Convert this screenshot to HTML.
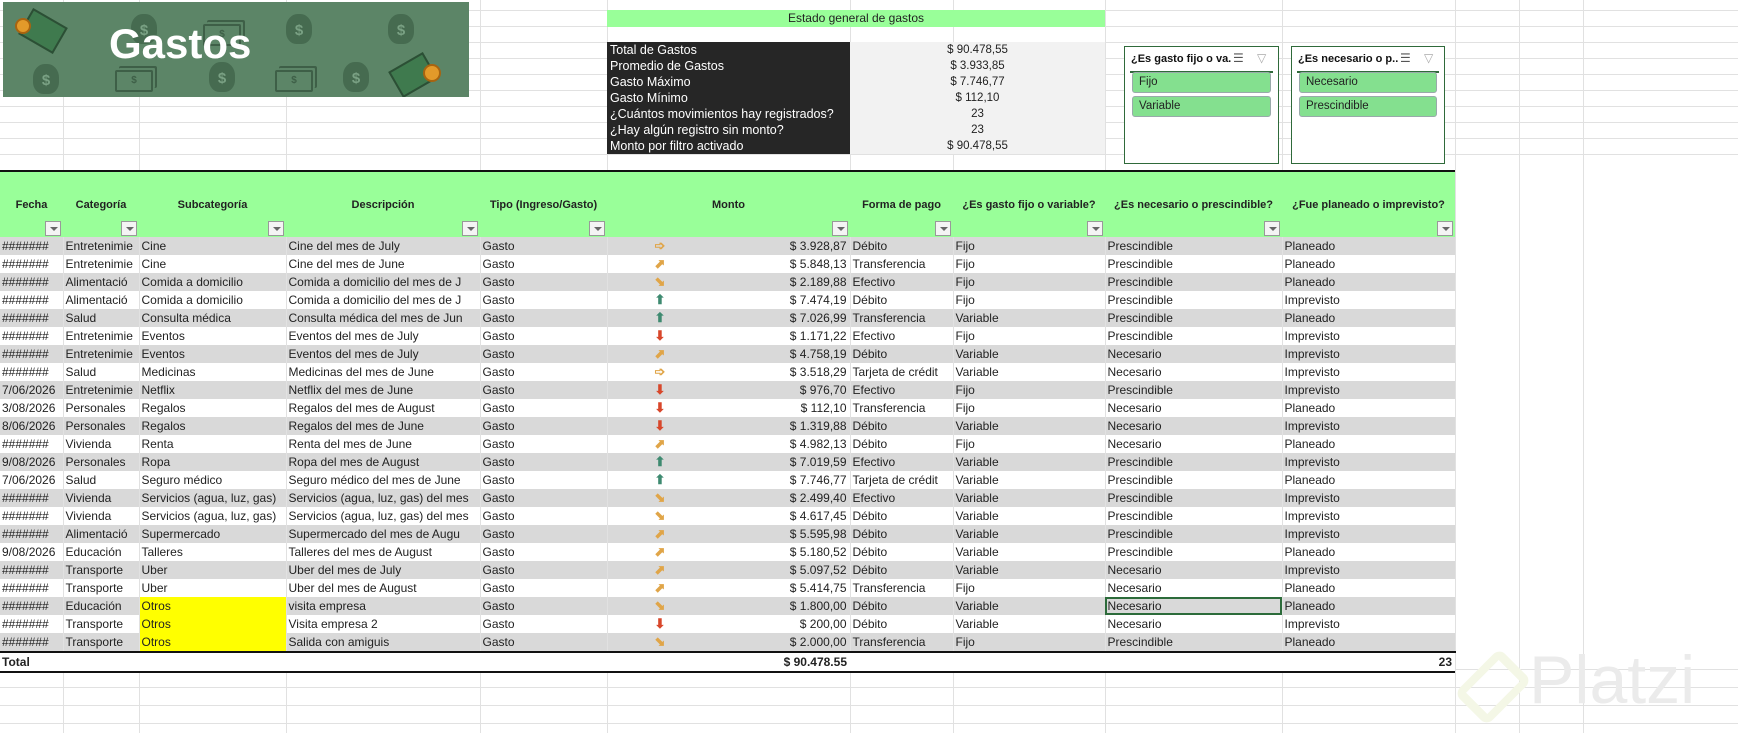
<!DOCTYPE html>
<html><head><meta charset="utf-8"><style>
*{margin:0;padding:0;box-sizing:border-box}
body{width:1738px;height:733px;overflow:hidden;position:relative;background:#fff;font-family:"Liberation Sans",sans-serif;color:#222}
.g{position:absolute;left:0;width:1738px;background-image:repeating-linear-gradient(to bottom,#e1e1e1 0,#e1e1e1 1px,transparent 1px,transparent 16px)}
.v{position:absolute;top:0;width:1px;height:733px;background:#e1e1e1}
.banner{position:absolute;left:3px;top:2px;width:466px;height:95px;background:#5c8567;overflow:hidden}
.banner .t{position:absolute;left:106px;top:18px;font-size:42px;font-weight:bold;color:#fff}
.bag{position:absolute;width:26px;height:30px;background:#466b50;border-radius:45% 45% 40% 40%;color:#7aa184;font-weight:bold;font-size:15px;text-align:center;line-height:34px}
.bill{position:absolute;width:38px;height:22px;border:2px solid #3e5f47;border-radius:2px;color:#3e5f47;font-size:10px;font-weight:bold;text-align:center;line-height:18px;box-shadow:3px -3px 0 -1px #5c8567,4px -4px 0 0 #3e5f47}
.estado{position:absolute;left:607px;top:10px;width:498px;height:17px;background:#99ff99;font-size:12px;text-align:center;line-height:17px}
.stats{position:absolute;left:607px;top:42px;width:498px;height:113px}
.stats .r{height:16px;display:flex;font-size:12.5px;line-height:16px}
.stats .k{width:243px;background:#262626;color:#fff;padding-left:3px}
.stats .val{width:255px;background:#f2f2f2;text-align:center;font-size:11.5px}
.slicer{position:absolute;top:46px;height:118px;border:1.5px solid #2f6a3a;background:#fff}
.slicer .h{position:absolute;left:6px;top:6px;font-size:11px;font-weight:bold;color:#111;width:100px;overflow:hidden;white-space:nowrap}
.slicer .ln{position:absolute;left:5px;right:5px;top:24px;height:1.5px;background:#2f6a3a}
.slicer .b{position:absolute;left:7px;right:7px;height:21px;background:#84e08f;border:1px solid #9aa;border-radius:3px;font-size:11.5px;line-height:19px;padding-left:6px}
.ic{position:absolute;top:4px;font-size:12px;color:#555}
table{position:absolute;left:0;top:170px;border-collapse:collapse;table-layout:fixed;width:1455px}
td{height:18px;font-size:12px;white-space:nowrap;overflow:hidden;padding:0 2px;line-height:18px;border-right:1px solid #e1e1e1;position:relative}
thead td{height:66px;background:#99ff99;border:none;font-size:11px;font-weight:bold;text-align:center;vertical-align:top;padding-top:26px;position:relative;line-height:14px}
thead tr{border-top:2px solid #111}
.fb{position:absolute;right:2px;bottom:1px;width:16px;height:15px;background:#f4f4f4;border:1px solid #999;}
.fb:after{content:"";position:absolute;left:4px;top:5px;border-left:4px solid transparent;border-right:4px solid transparent;border-top:4px solid #666}
tbody tr:nth-child(odd) td{background:#d9d9d9}
.m{text-align:right;padding-right:3px}
.a{position:absolute;left:47px;top:0;font-size:13px;font-weight:bold}
.o{color:#e0a548}.u{color:#3e8a70}.d{color:#d8472b}
td.y{background:#ffff00!important}
.sel{outline:2px solid #2c6b3a;outline-offset:-2px}
tr.tot td{background:#fff;font-weight:bold;border-right:none;border-top:2px solid #111;border-bottom:2px solid #111}
.pl{position:absolute;left:1529px;top:641px;font-size:68px;color:#ebebeb;font-family:"Liberation Sans",sans-serif}
.plg{position:absolute;left:1470px;top:658px;width:46px;height:58px;border:8px solid #f4f7e6;transform:skewY(0) rotate(45deg) scaleY(1.1);border-radius:8px}
</style></head><body>
<div class="g" style="top:10px;height:160px"></div>
<div class="g" style="top:669px;height:64px;background-image:repeating-linear-gradient(to bottom,#e1e1e1 0,#e1e1e1 1px,transparent 1px,transparent 18px)"></div>
<div class="v" style="left:63px"></div><div class="v" style="left:139px"></div><div class="v" style="left:286px"></div><div class="v" style="left:480px"></div><div class="v" style="left:607px"></div><div class="v" style="left:850px"></div><div class="v" style="left:953px"></div><div class="v" style="left:1105px"></div><div class="v" style="left:1282px"></div><div class="v" style="left:1455px"></div><div class="v" style="left:1519px"></div><div class="v" style="left:1583px"></div>

<div class="banner">
<div class="bag" style="left:128px;top:12px">$</div><div class="bag" style="left:283px;top:12px">$</div><div class="bag" style="left:385px;top:12px">$</div>
<div class="bag" style="left:30px;top:62px">$</div><div class="bag" style="left:206px;top:60px">$</div><div class="bag" style="left:340px;top:60px">$</div>
<div class="bill" style="left:200px;top:22px">$</div><div class="bill" style="left:112px;top:68px">$</div><div class="bill" style="left:272px;top:68px">$</div>
<div style="position:absolute;left:20px;top:14px;width:40px;height:30px;background:#3f7a4e;border:2px solid #2c4f35;transform:rotate(30deg)"></div>
<div style="position:absolute;left:12px;top:16px;width:16px;height:16px;border-radius:50%;background:#e39a2a;border:2px solid #a86410"></div>
<div style="position:absolute;left:390px;top:58px;width:40px;height:30px;background:#3f7a4e;border:2px solid #2c4f35;transform:rotate(-30deg)"></div>
<div style="position:absolute;left:420px;top:62px;width:18px;height:18px;border-radius:50%;background:#e39a2a;border:2px solid #a86410"></div>
<div class="t">Gastos</div>
</div>

<div class="estado">Estado general de gastos</div>
<div class="stats">
<div class="r"><div class="k">Total de Gastos</div><div class="val">$ 90.478,55</div></div>
<div class="r"><div class="k">Promedio de Gastos</div><div class="val">$ 3.933,85</div></div>
<div class="r"><div class="k">Gasto Máximo</div><div class="val">$ 7.746,77</div></div>
<div class="r"><div class="k">Gasto Mínimo</div><div class="val">$ 112,10</div></div>
<div class="r"><div class="k">¿Cuántos movimientos hay registrados?</div><div class="val">23</div></div>
<div class="r"><div class="k">¿Hay algún registro sin monto?</div><div class="val">23</div></div>
<div class="r"><div class="k">Monto por filtro activado</div><div class="val">$ 90.478,55</div></div>
</div>

<div class="slicer" style="left:1124px;width:155px"><div class="h">¿Es gasto fijo o va...</div><span class="ic" style="left:108px">☰</span><span class="ic" style="left:132px;color:#aaa">▽</span><div class="ln"></div><div class="b" style="top:25px">Fijo</div><div class="b" style="top:49px">Variable</div></div>
<div class="slicer" style="left:1291px;width:154px"><div class="h">¿Es necesario o p...</div><span class="ic" style="left:108px">☰</span><span class="ic" style="left:132px;color:#aaa">▽</span><div class="ln"></div><div class="b" style="top:25px">Necesario</div><div class="b" style="top:49px">Prescindible</div></div>

<table>
<colgroup><col style="width:63px"><col style="width:76px"><col style="width:147px"><col style="width:194px"><col style="width:127px"><col style="width:243px"><col style="width:103px"><col style="width:152px"><col style="width:177px"><col style="width:173px"></colgroup>
<thead><tr>
<td>Fecha<span class="fb"></span></td><td>Categoría<span class="fb"></span></td><td>Subcategoría<span class="fb"></span></td><td>Descripción<span class="fb"></span></td><td>Tipo (Ingreso/Gasto)<span class="fb"></span></td><td>Monto<span class="fb"></span></td><td>Forma de pago<span class="fb"></span></td><td>¿Es gasto fijo o variable?<span class="fb"></span></td><td>¿Es necesario o prescindible?<span class="fb"></span></td><td>¿Fue planeado o imprevisto?<span class="fb"></span></td>
</tr></thead>
<tbody>
<tr><td>#######</td><td>Entretenimie</td><td>Cine</td><td>Cine del mes de July</td><td>Gasto</td><td class="m"><span class="a o">➩</span>$ 3.928,87</td><td>Débito</td><td>Fijo</td><td>Prescindible</td><td>Planeado</td></tr>
<tr><td>#######</td><td>Entretenimie</td><td>Cine</td><td>Cine del mes de June</td><td>Gasto</td><td class="m"><span class="a o">⬈</span>$ 5.848,13</td><td>Transferencia</td><td>Fijo</td><td>Prescindible</td><td>Planeado</td></tr>
<tr><td>#######</td><td>Alimentació</td><td>Comida a domicilio</td><td>Comida a domicilio del mes de J</td><td>Gasto</td><td class="m"><span class="a o">⬊</span>$ 2.189,88</td><td>Efectivo</td><td>Fijo</td><td>Prescindible</td><td>Planeado</td></tr>
<tr><td>#######</td><td>Alimentació</td><td>Comida a domicilio</td><td>Comida a domicilio del mes de J</td><td>Gasto</td><td class="m"><span class="a u">⬆</span>$ 7.474,19</td><td>Débito</td><td>Fijo</td><td>Prescindible</td><td>Imprevisto</td></tr>
<tr><td>#######</td><td>Salud</td><td>Consulta médica</td><td>Consulta médica del mes de Jun</td><td>Gasto</td><td class="m"><span class="a u">⬆</span>$ 7.026,99</td><td>Transferencia</td><td>Variable</td><td>Prescindible</td><td>Planeado</td></tr>
<tr><td>#######</td><td>Entretenimie</td><td>Eventos</td><td>Eventos del mes de July</td><td>Gasto</td><td class="m"><span class="a d">⬇</span>$ 1.171,22</td><td>Efectivo</td><td>Fijo</td><td>Prescindible</td><td>Imprevisto</td></tr>
<tr><td>#######</td><td>Entretenimie</td><td>Eventos</td><td>Eventos del mes de July</td><td>Gasto</td><td class="m"><span class="a o">⬈</span>$ 4.758,19</td><td>Débito</td><td>Variable</td><td>Necesario</td><td>Imprevisto</td></tr>
<tr><td>#######</td><td>Salud</td><td>Medicinas</td><td>Medicinas del mes de June</td><td>Gasto</td><td class="m"><span class="a o">➩</span>$ 3.518,29</td><td>Tarjeta de crédit</td><td>Variable</td><td>Necesario</td><td>Imprevisto</td></tr>
<tr><td>7/06/2026</td><td>Entretenimie</td><td>Netflix</td><td>Netflix del mes de June</td><td>Gasto</td><td class="m"><span class="a d">⬇</span>$ 976,70</td><td>Efectivo</td><td>Fijo</td><td>Prescindible</td><td>Imprevisto</td></tr>
<tr><td>3/08/2026</td><td>Personales</td><td>Regalos</td><td>Regalos del mes de August</td><td>Gasto</td><td class="m"><span class="a d">⬇</span>$ 112,10</td><td>Transferencia</td><td>Fijo</td><td>Necesario</td><td>Planeado</td></tr>
<tr><td>8/06/2026</td><td>Personales</td><td>Regalos</td><td>Regalos del mes de June</td><td>Gasto</td><td class="m"><span class="a d">⬇</span>$ 1.319,88</td><td>Débito</td><td>Variable</td><td>Necesario</td><td>Imprevisto</td></tr>
<tr><td>#######</td><td>Vivienda</td><td>Renta</td><td>Renta del mes de June</td><td>Gasto</td><td class="m"><span class="a o">⬈</span>$ 4.982,13</td><td>Débito</td><td>Fijo</td><td>Necesario</td><td>Planeado</td></tr>
<tr><td>9/08/2026</td><td>Personales</td><td>Ropa</td><td>Ropa del mes de August</td><td>Gasto</td><td class="m"><span class="a u">⬆</span>$ 7.019,59</td><td>Efectivo</td><td>Variable</td><td>Prescindible</td><td>Imprevisto</td></tr>
<tr><td>7/06/2026</td><td>Salud</td><td>Seguro médico</td><td>Seguro médico del mes de June</td><td>Gasto</td><td class="m"><span class="a u">⬆</span>$ 7.746,77</td><td>Tarjeta de crédit</td><td>Variable</td><td>Prescindible</td><td>Planeado</td></tr>
<tr><td>#######</td><td>Vivienda</td><td>Servicios (agua, luz, gas)</td><td>Servicios (agua, luz, gas) del mes</td><td>Gasto</td><td class="m"><span class="a o">⬊</span>$ 2.499,40</td><td>Efectivo</td><td>Variable</td><td>Prescindible</td><td>Imprevisto</td></tr>
<tr><td>#######</td><td>Vivienda</td><td>Servicios (agua, luz, gas)</td><td>Servicios (agua, luz, gas) del mes</td><td>Gasto</td><td class="m"><span class="a o">⬊</span>$ 4.617,45</td><td>Débito</td><td>Variable</td><td>Prescindible</td><td>Imprevisto</td></tr>
<tr><td>#######</td><td>Alimentació</td><td>Supermercado</td><td>Supermercado del mes de Augu</td><td>Gasto</td><td class="m"><span class="a o">⬈</span>$ 5.595,98</td><td>Débito</td><td>Variable</td><td>Prescindible</td><td>Imprevisto</td></tr>
<tr><td>9/08/2026</td><td>Educación</td><td>Talleres</td><td>Talleres del mes de August</td><td>Gasto</td><td class="m"><span class="a o">⬈</span>$ 5.180,52</td><td>Débito</td><td>Variable</td><td>Prescindible</td><td>Planeado</td></tr>
<tr><td>#######</td><td>Transporte</td><td>Uber</td><td>Uber del mes de July</td><td>Gasto</td><td class="m"><span class="a o">⬈</span>$ 5.097,52</td><td>Débito</td><td>Variable</td><td>Necesario</td><td>Imprevisto</td></tr>
<tr><td>#######</td><td>Transporte</td><td>Uber</td><td>Uber del mes de August</td><td>Gasto</td><td class="m"><span class="a o">⬈</span>$ 5.414,75</td><td>Transferencia</td><td>Fijo</td><td>Necesario</td><td>Planeado</td></tr>
<tr><td>#######</td><td>Educación</td><td class="y">Otros</td><td>visita empresa</td><td>Gasto</td><td class="m"><span class="a o">⬊</span>$ 1.800,00</td><td>Débito</td><td>Variable</td><td class="sel">Necesario</td><td>Planeado</td></tr>
<tr><td>#######</td><td>Transporte</td><td class="y">Otros</td><td>Visita empresa 2</td><td>Gasto</td><td class="m"><span class="a d">⬇</span>$ 200,00</td><td>Débito</td><td>Variable</td><td>Necesario</td><td>Imprevisto</td></tr>
<tr><td>#######</td><td>Transporte</td><td class="y">Otros</td><td>Salida con amiguis</td><td>Gasto</td><td class="m"><span class="a o">⬊</span>$ 2.000,00</td><td>Transferencia</td><td>Fijo</td><td>Prescindible</td><td>Planeado</td></tr>
<tr class="tot"><td>Total</td><td></td><td></td><td></td><td></td><td class="m">$ 90.478.55</td><td></td><td></td><td></td><td class="m">23</td></tr>
</tbody></table>

<div class="plg"></div>
<div class="pl">Platzi</div>
</body></html>
